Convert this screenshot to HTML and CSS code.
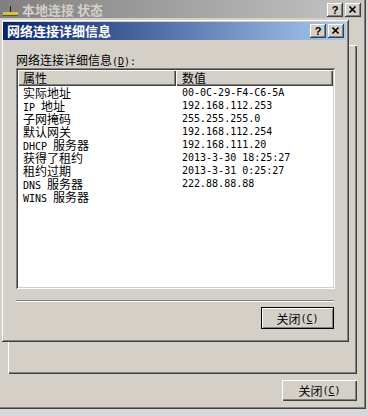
FILE: index.html
```html
<!DOCTYPE html>
<html>
<head>
<meta charset="utf-8">
<link rel="stylesheet" href="styles.css">
</head>
<body>
<div class="outer">
  <div class="caption inactive">
    <svg class="ico" viewBox="0 0 16 14" width="16" height="14">
      <line x1="7.5" y1="3" x2="7.5" y2="10" stroke="#202010" stroke-width="1"/>
      <rect x="0" y="9" width="15" height="3" fill="#d8c048"/>
      <line x1="0" y1="12.5" x2="15" y2="12.5" stroke="#5a5020" stroke-width="1"/>
    </svg>
    <span class="cap-text">本地连接 状态</span>
    <div class="cap-btns">
      <span class="cbtn">?</span>
      <span class="cbtn"><svg viewBox="0 0 16 14" width="16" height="14"><path d="M4.5 3.5 L10.5 9.5 M10.5 3.5 L4.5 9.5" stroke="#000" stroke-width="1.7" fill="none"/></svg></span>
    </div>
  </div>
  <div class="outer-body">
    <div class="tabpage"></div>
    <div class="btnrow"><button class="btn">关闭<span class="m">(<u>C</u>)</span></button></div>
  </div>

  <div class="inner">
    <div class="caption active">
      <span class="cap-text">网络连接详细信息</span>
      <div class="cap-btns">
        <span class="cbtn">?</span>
        <span class="cbtn"><svg viewBox="0 0 16 14" width="16" height="14"><path d="M4.5 3.5 L10.5 9.5 M10.5 3.5 L4.5 9.5" stroke="#000" stroke-width="1.7" fill="none"/></svg></span>
      </div>
    </div>
    <div class="inner-body">
      <div class="label">网络连接详细信息<span class="m">(<u>D</u>):</span></div>
      <div class="list">
        <div class="hdr">
          <div class="hc c1">属性</div>
          <div class="hc c2">数值</div>
        </div>
        <div class="rows">
          <div class="k">实际地址</div><div class="v m">00-0C-29-F4-C6-5A</div>
          <div class="k"><span class="m">IP </span>地址</div><div class="v m">192.168.112.253</div>
          <div class="k">子网掩码</div><div class="v m">255.255.255.0</div>
          <div class="k">默认网关</div><div class="v m">192.168.112.254</div>
          <div class="k"><span class="m">DHCP </span>服务器</div><div class="v m">192.168.111.20</div>
          <div class="k">获得了租约</div><div class="v m">2013-3-30 18:25:27</div>
          <div class="k">租约过期</div><div class="v m">2013-3-31 0:25:27</div>
          <div class="k"><span class="m">DNS </span>服务器</div><div class="v m">222.88.88.88</div>
          <div class="k"><span class="m">WINS </span>服务器</div><div class="v m"></div>
        </div>
      </div>
      <div class="sep"></div>
      <button class="btn def">关闭<span class="m">(<u>C</u>)</span></button>
    </div>
  </div>
</div>
</body>
</html>
```

FILE: styles.css
```css
body {
  margin: 0;
  width: 368px;
  height: 416px;
  overflow: hidden;
  background: #d8d8d8;
  font-family: "Noto Sans CJK SC", sans-serif;
  font-size: 12px;
  color: #000;
}

.m {
  font-family: "DejaVu Sans Mono", monospace;
  font-size: 10px;
}

.outer {
  position: relative;
  width: 366px;
  height: 409px;
  box-sizing: border-box;
  padding-right: 3px;
  background: #d4d0c8;
  box-shadow: inset -1px -1px #404040, inset -2px -2px #808080;
  display: flex;
  flex-direction: column;
}

.caption {
  height: 18px;
  box-sizing: border-box;
  display: flex;
  flex-shrink: 0;
}

.caption.inactive {
  background: linear-gradient(to right, #808080, #c4c4c4);
  padding: 3px 2px 0 3px;
  align-items: flex-start;
  color: #d4d0c8;
}

.caption.active {
  background: linear-gradient(to right, #0a246a, #a6caf0);
  padding: 0 2px 0 4px;
  align-items: center;
  color: #fff;
}

.ico {
  width: 16px;
  height: 14px;
  flex-shrink: 0;
}

.cap-text {
  font-weight: 700;
  font-size: 13px;
  line-height: 14px;
  margin-left: 3px;
  white-space: pre;
}

.caption.active .cap-text {
  margin-left: 0;
  line-height: 18px;
}

.cap-btns {
  margin-left: auto;
  display: flex;
  gap: 2px;
}

.cbtn {
  width: 16px;
  height: 14px;
  box-sizing: border-box;
  background: #d4d0c8;
  box-shadow: inset -1px -1px #404040, inset 1px 1px #fff, inset -2px -2px #808080;
  display: flex;
  align-items: center;
  justify-content: center;
  font: bold 11px "Liberation Sans", sans-serif;
  color: #000;
  line-height: 14px;
}

.cbtn svg {
  display: block;
}

.outer-body {
  flex: 1;
  display: flex;
  flex-direction: column;
}

.tabpage {
  margin: 27px 0 0 8px;
  width: 349px;
  height: 329px;
  box-sizing: border-box;
  box-shadow: inset 1px 1px #fff, inset -1px -1px #404040, inset -2px -2px #808080;
}

.btnrow {
  display: flex;
  justify-content: flex-end;
  padding-right: 6px;
  margin-top: 6px;
}

.btn {
  width: 75px;
  height: 21px;
  box-sizing: border-box;
  border: 0;
  padding: 0;
  margin: 0;
  background: #d4d0c8;
  box-shadow: inset 1px 1px #fff, inset -1px -1px #404040, inset -2px -2px #808080;
  font-family: "Noto Sans CJK SC", sans-serif;
  font-size: 12px;
  color: #000;
  display: flex;
  align-items: center;
  justify-content: center;
}

.btn.def {
  width: 73px;
  height: 22px;
  border: 1px solid #000;
  box-shadow: inset 1px 1px #fff, inset -1px -1px #808080;
  align-self: flex-end;
  margin-right: 12px;
  margin-top: 5px;
}

.inner {
  position: absolute;
  left: 1px;
  top: 19px;
  width: 348px;
  height: 323px;
  box-sizing: border-box;
  padding: 3px 3px 3px 2px;
  background: #d4d0c8;
  box-shadow: inset 1px 1px #d4d0c8, inset -1px -1px #404040, inset 2px 2px #fff, inset -2px -2px #808080;
  display: flex;
  flex-direction: column;
}

.inner-body {
  flex: 1;
  padding: 13px 0 0 13px;
  display: flex;
  flex-direction: column;
  align-items: flex-start;
}

.label {
  line-height: 13px;
  height: 13px;
}

.list {
  margin-top: 2px;
  width: 319px;
  height: 221px;
  box-sizing: border-box;
  padding: 2px;
  background: #fff;
  box-shadow: inset 1px 1px #808080, inset -1px -1px #fff, inset 2px 2px #404040, inset -2px -2px #d4d0c8;
}

.hdr {
  display: flex;
  height: 16px;
}

.hc {
  height: 16px;
  box-sizing: border-box;
  background: #d4d0c8;
  box-shadow: inset 1px 1px #fff, inset -1px -1px #404040, inset -2px -2px #808080;
  line-height: 16px;
  padding-left: 5px;
}

.c1 {
  width: 158px;
}

.c2 {
  flex: 1;
  padding-left: 6px;
}

.rows {
  display: grid;
  grid-template-columns: 158px 1fr;
}

.rows > div {
  height: 13px;
  line-height: 13px;
  white-space: pre;
}

.k {
  padding-left: 5px;
}

.v {
  padding-left: 6px;
}

.sep {
  margin-top: 11px;
  width: 318px;
  height: 2px;
  box-sizing: border-box;
  border-top: 1px solid #808080;
  border-bottom: 1px solid #fff;
}
```
